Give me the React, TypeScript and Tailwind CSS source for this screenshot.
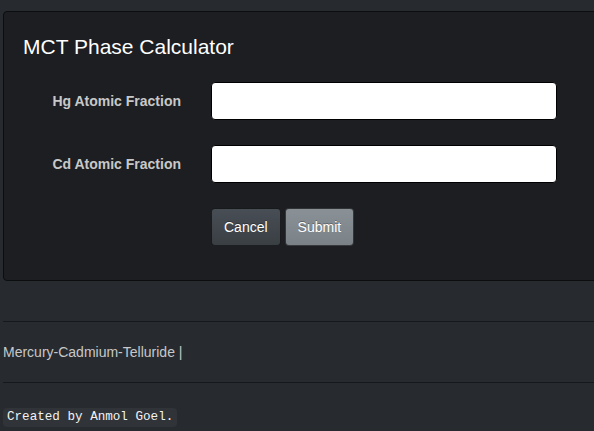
export default function App() {
  const rows = ['Hg Atomic Fraction', 'Cd Atomic Fraction']

  return (
    <div
      className="min-h-screen overflow-hidden bg-[#272b30] pl-[3px] pt-[11px] text-[14px] text-[#c8c8c8]"
      style={{ fontFamily: '"Liberation Sans", Arial, sans-serif' }}
    >
      <div className="w-[640px]">
        <div className="rounded-[4px] border border-[#0c0d0e] bg-[#1c1e22] pb-[34px] pl-[19px] pt-[23px]">
          <h2 className="text-[21px] leading-[23px] text-white">MCT Phase Calculator</h2>

          <form className="mt-[24px] flex flex-col gap-[25px]" onSubmit={(e) => e.preventDefault()}>
            {rows.map((label) => (
              <div key={label} className="flex items-center gap-[30px]">
                <label className="w-[158px] text-right font-bold leading-[20px] text-[#c8c8c8]">{label}</label>
                <input
                  type="text"
                  className="h-[38px] w-[346px] rounded-[4px] border border-black bg-white px-3 text-[14px] text-[#272b30] outline-none"
                />
              </div>
            ))}

            <div className="flex gap-[4px] pl-[188px]">
              <button
                type="button"
                className="h-[38px] rounded-[4px] border border-[rgba(0,0,0,0.6)] bg-gradient-to-b from-[#484e55] to-[#3a3f44] px-[12px] text-white [text-shadow:0_-1px_0_rgba(0,0,0,0.3)]"
              >
                Cancel
              </button>
              <button
                type="submit"
                className="h-[38px] rounded-[4px] border border-[rgba(0,0,0,0.6)] bg-gradient-to-b from-[#8a9196] to-[#7a8288] px-[12px] text-white [text-shadow:0_-1px_0_rgba(0,0,0,0.3)]"
              >
                Submit
              </button>
            </div>
          </form>
        </div>

        <hr className="mt-[40px] border-t border-[#16181b]" />
        <p className="mt-[20px] leading-[20px] text-[#c8c8c8]">Mercury-Cadmium-Telluride |</p>
        <hr className="mt-[20px] border-t border-[#16181b]" />

        <code
          className="mt-[25px] block w-fit rounded-[4px] bg-[#303337] px-[4px] py-[2px] text-[12.6px] leading-[15px] text-[#f2f2f2]"
          style={{ fontFamily: '"Liberation Mono", "Courier New", monospace' }}
        >
          Created by Anmol Goel.
        </code>
      </div>
    </div>
  )
}
